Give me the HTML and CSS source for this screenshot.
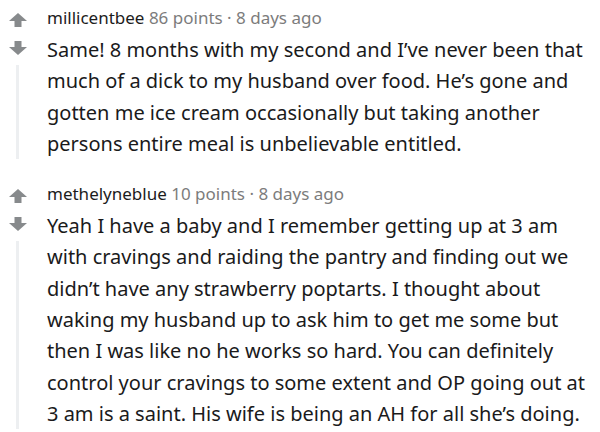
FILE: index.html
```html
<!DOCTYPE html>
<html>
<head>
<meta charset="utf-8">
<link rel="stylesheet" href="styles.css">
</head>
<body>
<div class="thread">
  <div class="comment">
    <div class="gutter">
      <svg class="arrow" viewBox="0 0 18 14"><path d="M9 0 L18 8 L12.5 8 L12.5 14 L5.5 14 L5.5 8 L0 8 Z"/></svg>
      <svg class="arrow down" viewBox="0 0 18 14"><path d="M9 14 L18 6 L12.5 6 L12.5 0 L5.5 0 L5.5 6 L0 6 Z"/></svg>
      <div class="line"></div>
    </div>
    <div class="content">
      <div class="meta"><span class="user">millicentbee</span> <span class="info">86 points · 8 days ago</span></div>
      <p class="body">Same! 8 months with my second and I’ve never been that much of a dick to my husband over food. He’s gone and gotten me ice cream occasionally but taking another persons entire meal is unbelievable entitled.</p>
    </div>
  </div>
  <div class="comment">
    <div class="gutter">
      <svg class="arrow" viewBox="0 0 18 14"><path d="M9 0 L18 8 L12.5 8 L12.5 14 L5.5 14 L5.5 8 L0 8 Z"/></svg>
      <svg class="arrow down" viewBox="0 0 18 14"><path d="M9 14 L18 6 L12.5 6 L12.5 0 L5.5 0 L5.5 6 L0 6 Z"/></svg>
      <div class="line"></div>
    </div>
    <div class="content">
      <div class="meta"><span class="user">methelyneblue</span> <span class="info">10 points · 8 days ago</span></div>
      <p class="body">Yeah I have a baby and I remember getting up at 3 am with cravings and raiding the pantry and finding out we didn’t have any strawberry poptarts. I thought about waking my husband up to ask him to get me some but then I was like no he works so hard. You can definitely control your cravings to some extent and OP going out at 3 am is a saint. His wife is being an AH for all she’s doing.</p>
    </div>
  </div>
</div>
</body>
</html>
```
FILE: styles.css
```css
html, body {
  margin: 0;
  padding: 0;
  background: #ffffff;
}
body {
  font-family: "Noto Sans", "Open Sans", sans-serif;
  color: #1a1a1b;
  width: 600px;
  height: 432px;
  overflow: hidden;
}
.thread {
  padding-top: 7px;
}
.comment {
  display: flex;
  margin-bottom: 24px;
}
.gutter {
  width: 35px;
  flex: none;
  display: flex;
  flex-direction: column;
  align-items: center;
  padding-top: 6px;
}
.arrow {
  width: 18px;
  height: 14px;
  fill: #878a8c;
}
.arrow.down {
  margin-top: 14px;
}
.line {
  width: 3px;
  flex: 1;
  background: #edeff1;
  margin-top: 10px;
}
.content {
  margin-left: 12px;
  width: 543px;
}
.meta {
  font-size: 17px;
  line-height: 22px;
}
.user {
  color: #1c1c1c;
}
.info {
  color: #7c7c7c;
}
.body {
  margin: 5px 0 0;
  font-size: 20px;
  line-height: 31.3px;
}
```
